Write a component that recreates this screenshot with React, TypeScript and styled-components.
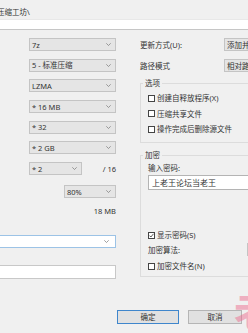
import React from 'react'
import styled, { createGlobalStyle } from 'styled-components'

const GlobalStyle = createGlobalStyle`
  html, body {
    margin: 0;
    padding: 0;
    background: #f0f0f0;
  }
  body {
    font-family: "Noto Sans", "Noto Sans CJK SC", sans-serif;
  }
`

const Chevron: React.FC = () => (
  <svg width="5" height="3" viewBox="0 0 5 3">
    <polyline points="0.3,0.3 2.5,2.5 4.7,0.3" fill="none" stroke="#777" strokeWidth="0.7" />
  </svg>
)

const Check: React.FC<{ checked?: boolean }> = ({ checked }) => (
  <CheckBox>
    {checked && (
      <svg width="5" height="5" viewBox="0 0 5 5">
        <polyline points="0.5,2.6 1.9,4 4.5,0.8" fill="none" stroke="#333" strokeWidth="0.8" />
      </svg>
    )}
  </CheckBox>
)

const App: React.FC = () => {
  const leftCombos = ['7z', '5 - 标准压缩', 'LZMA', '* 16 MB', '* 32', '* 2 GB']
  const options = ['创建自释放程序(X)', '压缩共享文件', '操作完成后删除源文件']

  return (
    <>
      <GlobalStyle />
      <Window>
        <PathLabel>压缩工坊\</PathLabel>
        <PathInput />

        <Body>
          <LeftCol>
            <ComboStack>
              {leftCombos.map(item => (
                <Combo key={item}>
                  <span>{item}</span>
                  <Chevron />
                </Combo>
              ))}
              <ThreadRow>
                <Combo $width={53}>
                  <span>* 2</span>
                  <Chevron />
                </Combo>
                <span>/ 16</span>
              </ThreadRow>
            </ComboStack>

            <Combo $width={52} $top={10}>
              <span>80%</span>
              <Chevron />
            </Combo>
            <SizeText>18 MB</SizeText>

            <WideCombo>
              <span />
              <Chevron />
            </WideCombo>
            <WhiteInput />
          </LeftCol>

          <RightCol>
            <FieldRow>
              <span>更新方式(U):</span>
              <Combo $width={80}>
                <span>添加并替换文件</span>
              </Combo>
            </FieldRow>
            <FieldRow>
              <span>路径模式</span>
              <Combo $width={80}>
                <span>相对路径</span>
              </Combo>
            </FieldRow>

            <Group $top={7}>
              <Legend>选项</Legend>
              <CheckList>
                {options.map(opt => (
                  <CheckRow key={opt}>
                    <Check />
                    <span>{opt}</span>
                  </CheckRow>
                ))}
              </CheckList>
            </Group>

            <Group $top={8} $padTop={4.5} $padBottom={6}>
              <Legend>加密</Legend>
              <Caption>输入密码:</Caption>
              <PasswordBox>上老王论坛当老王</PasswordBox>
              <CheckRow $top={41}>
                <Check checked />
                <span>显示密码(S)</span>
              </CheckRow>
              <AlgoRow>
                <span>加密算法:</span>
                <Combo $width={40}>
                  <span>AES-256</span>
                </Combo>
              </AlgoRow>
              <CheckRow $top={7}>
                <Check />
                <span>加密文件名(N)</span>
              </CheckRow>
            </Group>
          </RightCol>
        </Body>

        <Footer>
          <Button $primary $width={62}>确定</Button>
          <Button $width={54}>取消</Button>
        </Footer>

        <Watermark>老</Watermark>
      </Window>
    </>
  )
}

const Window = styled.div`
  position: relative;
  width: 248px;
  height: 333px;
  overflow: hidden;
  background: #f0f0f0;
  color: #333;
  font-size: 7.5px;
  line-height: 8px;
  display: flex;
  flex-direction: column;
`

const PathLabel = styled.div`
  padding-top: 8px;
  height: 11px;
  margin-left: -3px;
  white-space: nowrap;
`

const PathInput = styled.div`
  box-sizing: border-box;
  height: 11px;
  background: #fff;
  border-top: 1px solid #e8e8e8;
  border-bottom: 1px solid #c6c6c6;
`

const Body = styled.div`
  display: grid;
  grid-template-columns: 116px 140px;
  column-gap: 24px;
  align-items: start;
  margin-top: 8px;
`

const LeftCol = styled.div`
  display: flex;
  flex-direction: column;
  align-items: flex-end;
`

const ComboStack = styled.div`
  display: flex;
  flex-direction: column;
  gap: 7.7px;
  width: 87px;
`

const Combo = styled.div<{ $width?: number; $top?: number }>`
  box-sizing: border-box;
  display: flex;
  align-items: center;
  justify-content: space-between;
  flex-shrink: 0;
  width: ${p => (p.$width ? `${p.$width}px` : '100%')};
  height: 13px;
  margin-top: ${p => p.$top ?? 0}px;
  padding: 0 4px 0 2px;
  background: #e5e5e5;
  border: 1px solid #c4c4c4;
  white-space: nowrap;
  overflow: hidden;
`

const ThreadRow = styled.div`
  display: flex;
  align-items: center;
  justify-content: space-between;
`

const SizeText = styled.div`
  margin-top: 9px;
`

const WideCombo = styled(Combo)`
  align-self: stretch;
  width: auto;
  margin-top: 20px;
  margin-left: -4px;
  padding-right: 6px;
  background: #fff;
  border-color: #9cc3e6;
`

const WhiteInput = styled.div`
  align-self: stretch;
  box-sizing: border-box;
  height: 14px;
  margin-top: 17px;
  margin-left: -4px;
  background: #fff;
  border: 1px solid #c8c8c8;
`

const RightCol = styled.div`
  display: flex;
  flex-direction: column;
  gap: 8px;
`

const FieldRow = styled.div`
  display: grid;
  grid-template-columns: 84px 1fr;
  align-items: center;
  height: 13px;
  white-space: nowrap;
`

const Group = styled.fieldset<{ $top: number; $padTop?: number; $padBottom?: number }>`
  box-sizing: border-box;
  width: 140px;
  min-width: 0;
  margin: ${p => p.$top - 8}px 0 0 0;
  padding: ${p => p.$padTop ?? 7}px 0 ${p => p.$padBottom ?? 9}px 7px;
  border: 1px solid #dcdcdc;
`

const Legend = styled.legend`
  margin-left: -5px;
  padding: 0 2px;
  line-height: 8px;
  font-size: 7.5px;
`

const CheckList = styled.div`
  display: flex;
  flex-direction: column;
  gap: 7.5px;
`

const CheckRow = styled.div<{ $top?: number }>`
  display: flex;
  align-items: center;
  gap: 2px;
  height: 8px;
  margin-top: ${p => p.$top ?? 0}px;
  white-space: nowrap;
`

const CheckBox = styled.span`
  box-sizing: border-box;
  display: flex;
  align-items: center;
  justify-content: center;
  width: 7px;
  height: 7px;
  background: #fff;
  border: 1px solid #444;
`

const Caption = styled.div`
  height: 8px;
`

const PasswordBox = styled.div`
  box-sizing: border-box;
  display: flex;
  align-items: center;
  height: 15px;
  margin-top: 3.5px;
  padding-left: 3px;
  background: #fff;
  border: 1px solid #b4b4b4;
  font-size: 8px;
  white-space: nowrap;
`

const AlgoRow = styled.div`
  display: grid;
  grid-template-columns: 99px 1fr;
  align-items: center;
  height: 12px;
  margin-top: 4px;
  white-space: nowrap;
`

const Footer = styled.div`
  display: flex;
  justify-content: flex-end;
  gap: 9px;
  margin-top: 31px;
  padding-right: 6px;
`

const Button = styled.button<{ $primary?: boolean; $width: number }>`
  box-sizing: border-box;
  width: ${p => p.$width}px;
  height: 14px;
  padding: 0;
  font: inherit;
  color: #333;
  background: #e1e1e1;
  border: 1px solid ${p => (p.$primary ? '#3f86cc' : '#b5b5b5')};
`

const Watermark = styled.div`
  position: absolute;
  left: 234px;
  top: 288px;
  font-size: 42px;
  line-height: 42px;
  font-family: "Noto Sans CJK SC", sans-serif;
  font-weight: 700;
  color: rgba(236, 110, 145, 0.5);
  pointer-events: none;
`

export default App
